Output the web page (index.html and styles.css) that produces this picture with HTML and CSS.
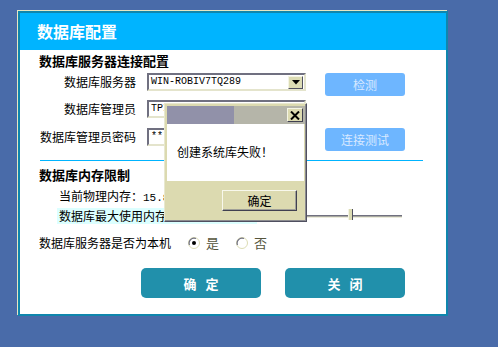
FILE: index.html
```html
<!DOCTYPE html>
<html lang="zh-CN">

<head>
  <meta charset="utf-8">
  <title>数据库配置</title>
  <link rel="stylesheet" href="styles.css">
</head>

<body>
  <div class="desk">
    <div class="win">
      <div class="win-title">数据库配置</div>
      <div class="win-body">
        <div class="sec-title">数据库服务器连接配置</div>
        <div class="conn">
          <label class="lbl">数据库服务器</label>
          <div class="field combo">
            <span class="val">WIN-ROBIV7TQ289</span>
            <span class="drop">
              <svg width="8" height="5" viewBox="0 0 8 5"><path d="M0 0h8L4 4.5z" fill="#000" /></svg>
            </span>
          </div>
          <button class="btn-light">检测</button>

          <label class="lbl">数据库管理员</label>
          <div class="field"><span class="val">TPI</span></div>
          <span></span>

          <label class="lbl">数据库管理员密码</label>
          <div class="field"><span class="val">***</span></div>
          <button class="btn-light">连接测试</button>
        </div>

        <div class="sep"></div>

        <div class="sec-title sec-mem">数据库内存限制</div>
        <div class="mem-row">当前物理内存：<span class="mono">15.8</span></div>
        <div class="mem-row mem-max">
          <span class="hl">数据库最大使用内存</span>
          <div class="slider"><span class="thumb"></span></div>
        </div>

        <div class="radio-row">
          <span class="radio-lbl">数据库服务器是否为本机</span>
          <span class="opt">
            <svg class="radio" width="12" height="12" viewBox="0 0 12 12">
              <circle cx="6" cy="6" r="5.5" fill="#fff" stroke="#dcdcb4" />
              <path d="M1.5 8A5 5 0 0 1 8 1.5" fill="none" stroke="#707080" stroke-width="1.2" />
              <circle cx="6" cy="6" r="2" fill="#000" />
            </svg>
            是
          </span>
          <span class="opt">
            <svg class="radio" width="12" height="12" viewBox="0 0 12 12">
              <circle cx="6" cy="6" r="5.5" fill="#fff" stroke="#dcdcb4" />
              <path d="M1.5 8A5 5 0 0 1 8 1.5" fill="none" stroke="#707080" stroke-width="1.2" />
            </svg>
            否
          </span>
        </div>

        <div class="actions">
          <button class="btn-teal">确&nbsp;&nbsp;&nbsp;定</button>
          <button class="btn-teal">关&nbsp;&nbsp;&nbsp;闭</button>
        </div>
      </div>
    </div>

    <div class="dlg">
      <div class="dlg-title">
        <span class="dlg-close">
          <svg width="10" height="9" viewBox="0 0 10 9"><path d="M1 0.5l8 8M9 0.5l-8 8" stroke="#000" stroke-width="2" /></svg>
        </span>
      </div>
      <div class="dlg-msg">创建系统库失败！</div>
      <div class="dlg-foot">
        <button class="dlg-btn">确定</button>
      </div>
    </div>
  </div>
</body>

</html>
```

FILE: styles.css
```css
html,
body {
  margin: 0;
  background: #496ba9;
}

body {
  font-family: "Noto Sans CJK SC", "Noto Sans", sans-serif;
  font-size: 12px;
  color: #000;
}

.desk {
  position: relative;
  width: 498px;
  height: 347px;
  overflow: hidden;
}

/* main window */
.win {
  position: absolute;
  left: 18px;
  top: 11px;
  width: 426px;
  height: 301px;
  border: 2px solid #0f86ad;
  box-shadow: -1px -1px 0 #e6e6c4;
  background: #fff;
  display: flex;
  flex-direction: column;
}

.win-title {
  height: 37px;
  background: #00b4ff;
  color: #fff;
  font-size: 16px;
  font-weight: bold;
  line-height: 36px;
  padding-left: 17px;
}

.win-body {
  flex: 1;
  display: flex;
  flex-direction: column;
}

.sec-title {
  margin: 3px 0 0 19px;
  font-size: 13px;
  font-weight: bold;
  line-height: 16px;
}

.conn {
  margin-top: 4px;
  display: grid;
  grid-template-columns: 116px 159px 88px;
  grid-template-rows: 27px 28px 23px;
  column-gap: 11px;
  align-items: start;
}

.lbl {
  text-align: right;
  line-height: 18px;
  white-space: nowrap;
  font-size: 12px;
}

.field {
  height: 18px;
  box-sizing: border-box;
  border: 2px solid;
  border-color: #707080 #e4e4cc #e4e4cc #707080;
  background: #fff;
  display: flex;
  align-items: center;
}

.val {
  flex: 1;
  padding-left: 2px;
  font-family: "Liberation Mono", "DejaVu Sans Mono", monospace;
  font-size: 10px;
  line-height: 14px;
}

.drop {
  width: 15px;
  height: 13px;
  margin-right: 1px;
  box-sizing: border-box;
  background: #dcdcb4;
  border: 1px solid;
  border-color: #f4f4e4 #505060 #505060 #f4f4e4;
  display: flex;
  align-items: center;
  justify-content: center;
}

.btn-light {
  justify-self: end;
  width: 80px;
  height: 23px;
  border: 0;
  border-radius: 3px;
  background: #6eb6ff;
  color: #d9e9ff;
  font-family: inherit;
  font-size: 12px;
  padding: 0;
}

.sep {
  margin: 9px 0 0 20px;
  width: 383px;
  height: 1px;
  background: #00b4ff;
}

.sec-mem {
  margin-top: 6px;
}

.mem-row {
  margin: 5px 0 0 39px;
  line-height: 16px;
  height: 16px;
}

.mono {
  font-family: "Liberation Mono", "DejaVu Sans Mono", monospace;
  font-size: 11px;
}

.mem-max {
  margin: 4px 0 0 37px;
  display: flex;
  align-items: center;
}

.hl {
  background: #dcffff;
  padding: 0 90px 0 2px;
}

.slider {
  position: relative;
  margin-left: 20px;
  width: 125px;
  height: 3px;
  box-sizing: border-box;
  border-top: 1px solid #707080;
  border-bottom: 1px solid #ececdc;
  background: #a8a8a0;
}

.thumb {
  position: absolute;
  left: 71px;
  top: -7px;
  width: 3px;
  height: 11px;
  background: #dcdcb4;
  border-left: 1px solid #f4f4e4;
  border-right: 1px solid #505060;
}

.radio-row {
  margin: 11px 0 0 19px;
  display: flex;
  align-items: center;
  line-height: 16px;
}

.radio-lbl {
  width: 149px;
}

.opt {
  display: flex;
  align-items: center;
  gap: 6px;
  width: 48px;
  color: #55553c;
  font-size: 13px;
}

.actions {
  margin: 17px 0 0 121px;
  display: flex;
  gap: 24px;
}

.btn-teal {
  width: 120px;
  height: 30px;
  border: 0;
  border-radius: 5px;
  background: #2190ab;
  color: #fff;
  font-family: inherit;
  font-size: 13px;
  font-weight: bold;
  padding: 0;
}

/* message box */
.dlg {
  position: absolute;
  left: 164px;
  top: 103px;
  width: 143px;
  height: 119px;
  box-sizing: border-box;
  border: 1px solid;
  border-color: #e8e8d0 #505060 #505060 #e8e8d0;
  background: #dcdab0;
  padding: 2px 1px 2px 2px;
  display: flex;
  flex-direction: column;
  box-shadow: inset -1px -1px 0 #8c8c90;
}

.dlg-title {
  height: 18px;
  background: linear-gradient(to right, #9191a9 0, #9191a9 67px, #b5b5a9 67px);
  display: flex;
  align-items: center;
  justify-content: flex-end;
  padding-right: 2px;
}

.dlg-close {
  width: 16px;
  height: 14px;
  box-sizing: border-box;
  background: #dcdab0;
  border: 1px solid;
  border-color: #f4f4e4 #404050 #404050 #f4f4e4;
  display: flex;
  align-items: center;
  justify-content: center;
}

.dlg-msg {
  height: 57px;
  background: #fff;
  padding-left: 10px;
  line-height: 56px;
  font-size: 12px;
  margin-right: 1px;
}

.dlg-foot {
  flex: 1;
  display: flex;
  justify-content: flex-end;
  align-items: flex-start;
  padding: 9px 8px 0 0;
}

.dlg-btn {
  width: 75px;
  height: 21px;
  box-sizing: border-box;
  border: 1px solid;
  border-color: #f8f8ec #404050 #404050 #f8f8ec;
  background: #dcdab0;
  font-family: inherit;
  font-size: 12px;
  padding: 0;
  box-shadow: inset -1px -1px 0 #a0a098;
}
```
